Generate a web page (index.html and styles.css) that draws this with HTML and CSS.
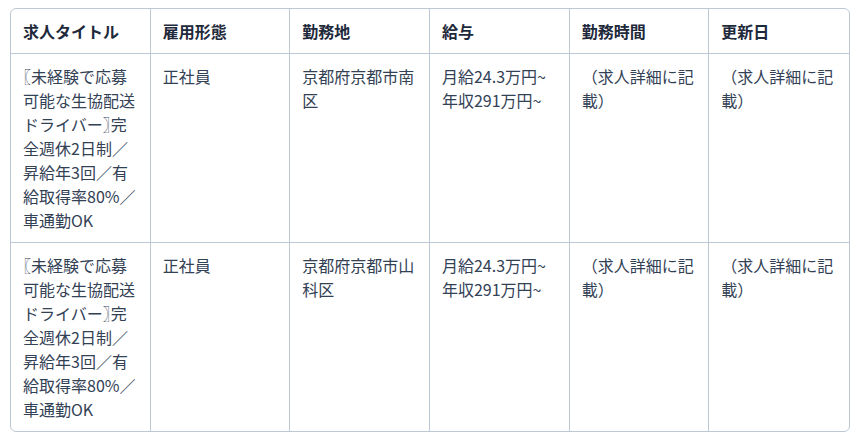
FILE: index.html
```html
<!DOCTYPE html>
<html lang="ja">
<head>
<meta charset="utf-8">
<link rel="stylesheet" href="styles.css">
</head>
<body>
<div class="table-wrap">
  <table class="jobs">
    <thead>
      <tr>
        <th>求人タイトル</th>
        <th>雇用形態</th>
        <th>勤務地</th>
        <th>給与</th>
        <th>勤務時間</th>
        <th>更新日</th>
      </tr>
    </thead>
    <tbody>
      <tr>
        <td><span class="half">〖</span>未経験で応募可能な生協配送ドライバー<span class="half">〗</span>完全週休2日制／昇給年3回／有給取得率80%／車通勤OK</td>
        <td>正社員</td>
        <td>京都府京都市南区</td>
        <td>月給24.3万円~<br>年収291万円~</td>
        <td>（求人詳細に記載）</td>
        <td>（求人詳細に記載）</td>
      </tr>
      <tr>
        <td><span class="half">〖</span>未経験で応募可能な生協配送ドライバー<span class="half">〗</span>完全週休2日制／昇給年3回／有給取得率80%／車通勤OK</td>
        <td>正社員</td>
        <td>京都府京都市山科区</td>
        <td>月給24.3万円~<br>年収291万円~</td>
        <td>（求人詳細に記載）</td>
        <td>（求人詳細に記載）</td>
      </tr>
    </tbody>
  </table>
</div>
</body>
</html>
```

FILE: styles.css
```css
html, body {
  margin: 0;
  padding: 0;
  background: #ffffff;
}

body {
  font-family: "Noto Sans CJK JP", "Noto Sans", sans-serif;
  font-size: 16px;
  line-height: 24px;
  color: #334155;
}

.table-wrap {
  width: 840px;
  box-sizing: border-box;
  margin: 8px 10px;
  border: 1px solid #bcc8d4;
  border-radius: 6px;
  overflow: hidden;
}

.jobs {
  width: 100%;
  table-layout: fixed;
  border-collapse: separate;
  border-spacing: 0;
}

.jobs th,
.jobs td {
  padding: 10px 12px;
  text-align: left;
  vertical-align: top;
  border-right: 1px solid #bcc8d4;
  border-bottom: 1px solid #bcc8d4;
  word-break: break-all;
}

.jobs th:last-child,
.jobs td:last-child {
  border-right: none;
}

.jobs tbody tr:last-child td {
  border-bottom: none;
}

.jobs th {
  font-weight: 700;
  color: #1e293b;
}

.half {
  font-feature-settings: "halt";
}
```
